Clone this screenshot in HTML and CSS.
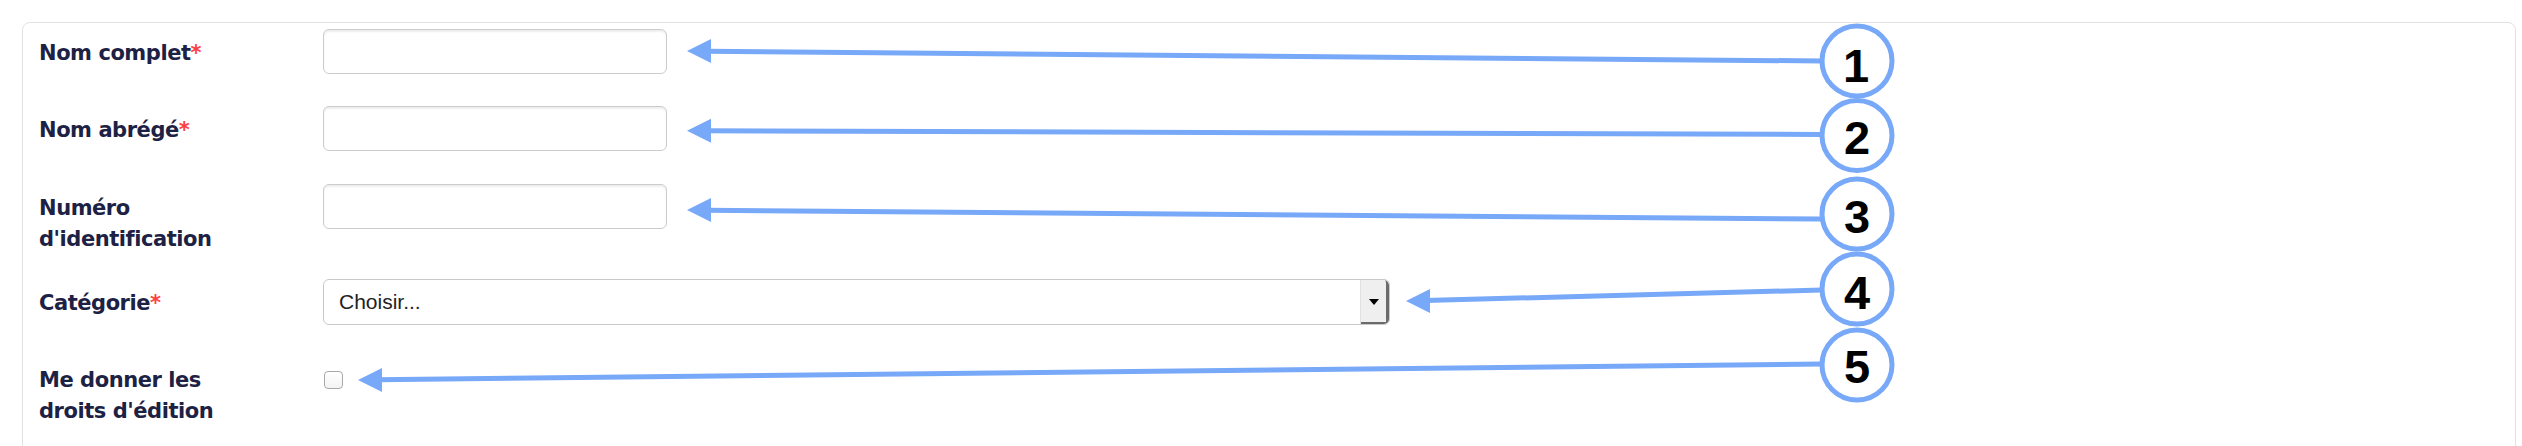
FILE: index.html
```html
<!DOCTYPE html>
<html lang="fr">
<head>
<meta charset="utf-8">
<title>Formulaire</title>
<link rel="stylesheet" href="styles.css">
</head>
<body>
<div class="page">
  <div class="panel">
    <div class="row">
      <div class="label">Nom complet<span class="req">*</span></div>
      <div class="control"><div class="input"></div></div>
    </div>
    <div class="row row-b">
      <div class="label">Nom abrégé<span class="req">*</span></div>
      <div class="control"><div class="input"></div></div>
    </div>
    <div class="row row-tall">
      <div class="label">Numéro<br>d'identification</div>
      <div class="control"><div class="input"></div></div>
    </div>
    <div class="row">
      <div class="label">Catégorie<span class="req">*</span></div>
      <div class="control">
        <div class="select">
          <span class="select-text">Choisir...</span>
          <span class="select-btn"><span class="caret"></span></span>
        </div>
      </div>
    </div>
    <div class="row">
      <div class="label">Me donner les<br>droits d'édition</div>
      <div class="control"><div class="checkbox"></div></div>
    </div>
  </div>
</div>
<svg class="overlay" width="2522" height="446" viewBox="0 0 2522 446">
  <g class="arrows">
    <line x1="706" y1="51.2" x2="1822" y2="61"/>
    <polygon points="687,51 711,39 711,63"/>
    <line x1="706" y1="130.8" x2="1822" y2="134.5"/>
    <polygon points="687,130.7 711,118.7 711,142.7"/>
    <line x1="706" y1="210.2" x2="1822" y2="219"/>
    <polygon points="687,210 711,198 711,222"/>
    <line x1="1425" y1="300.5" x2="1822" y2="290"/>
    <polygon points="1406,301 1430,289 1430,313"/>
    <line x1="377" y1="379.8" x2="1822" y2="364"/>
    <polygon points="358,380 382,368 382,392"/>
  </g>
  <g class="bubbles">
    <circle cx="1857" cy="61" r="35"/>
    <circle cx="1857" cy="135.5" r="35"/>
    <circle cx="1857" cy="214" r="35"/>
    <circle cx="1857" cy="289" r="35"/>
    <circle cx="1857" cy="365" r="35"/>
  </g>
  <g class="nums">
    <text x="1856" y="82">1</text>
    <text x="1857" y="154">2</text>
    <text x="1857" y="233">3</text>
    <text x="1857" y="309">4</text>
    <text x="1857" y="383">5</text>
  </g>
</svg>
</body>
</html>
```
FILE: styles.css
```css
html, body {
  margin: 0;
  padding: 0;
  width: 2522px;
  height: 446px;
  overflow: hidden;
  background: #ffffff;
}

.page {
  padding: 22px 6px 0 22px;
}

.panel {
  border: 1px solid #e2e2e2;
  border-radius: 8px;
  height: 520px;
  padding: 6px 0 0 16px;
  box-sizing: border-box;
}

.row {
  display: flex;
  min-height: 77px;
}

.row-b {
  min-height: 78px;
}

.row-tall {
  min-height: 95px;
}

.label {
  width: 284px;
  flex: none;
  padding-top: 9px;
  font-family: "DejaVu Sans", Verdana, sans-serif;
  font-weight: bold;
  font-size: 21px;
  letter-spacing: -0.45px;
  line-height: 31px;
  color: #1d2244;
}

.req {
  color: #ff4040;
  font-weight: bold;
}

.control {
  flex: 1;
}

.input {
  width: 344px;
  height: 45px;
  box-sizing: border-box;
  border: 1px solid #cccccc;
  border-radius: 6px;
  box-shadow: inset 0 2px 2px rgba(0, 0, 0, 0.07);
  background: #fff;
}

.select {
  width: 1067px;
  height: 46px;
  box-sizing: border-box;
  border: 1px solid #c9c9c9;
  border-radius: 6px;
  display: flex;
  align-items: center;
  justify-content: space-between;
  overflow: hidden;
  background: #fff;
}

.select-text {
  padding-left: 15px;
  font-family: "Liberation Sans", Arial, sans-serif;
  font-size: 21px;
  color: #222222;
}

.select-btn {
  width: 29px;
  height: 100%;
  box-sizing: border-box;
  background: #efefef;
  border-left: 1px solid #e2e2e2;
  box-shadow: inset -3px -2px 0 #6b6b6b;
  border-top-right-radius: 5px;
  display: flex;
  align-items: center;
  justify-content: center;
  padding-right: 3px;
  padding-bottom: 1px;
}

.caret {
  width: 0;
  height: 0;
  border-left: 5px solid transparent;
  border-right: 5px solid transparent;
  border-top: 6px solid #000;
}

.checkbox {
  margin-top: 15px;
  margin-left: 1px;
  width: 19px;
  height: 18px;
  box-sizing: border-box;
  border: 1px solid #a8a8a8;
  border-radius: 4px;
  background: linear-gradient(#ffffff, #f3f3f3);
}

.overlay {
  position: absolute;
  left: 0;
  top: 0;
  pointer-events: none;
}

.arrows line {
  stroke: #78a8f8;
  stroke-width: 5;
}

.arrows polygon {
  fill: #78a8f8;
}

.bubbles circle {
  fill: #ffffff;
  stroke: #78a8f8;
  stroke-width: 5;
}

.nums text {
  font-family: "Liberation Sans", Arial, sans-serif;
  font-weight: bold;
  font-size: 47px;
  fill: #000;
  text-anchor: middle;
}
```
